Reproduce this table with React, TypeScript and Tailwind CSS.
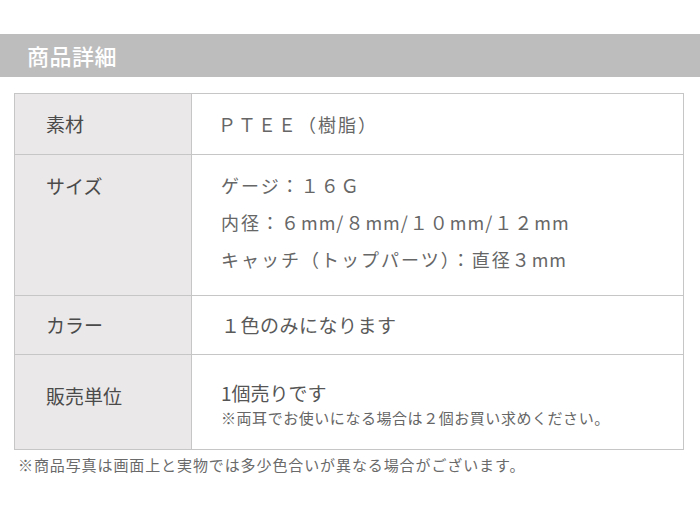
const FONT = "font-['Noto_Sans_CJK_JP','Noto_Sans',sans-serif]";

function Row({
  label,
  height,
  alignTop,
  labelClass = "",
  children,
}: {
  label: string;
  height: string;
  alignTop?: boolean;
  labelClass?: string;
  children: React.ReactNode;
}) {
  return (
    <div className={`flex border-t border-[#c6c6c6] first:border-t-0 ${height}`}>
      <div
        className={`flex w-[177px] shrink-0 border-r border-[#c6c6c6] bg-[#eae8e8] pl-[31px] text-[19px] text-[#4a4a4a] ${
          alignTop ? "items-start pt-[12px] leading-[37px]" : "items-center"
        } ${labelClass}`}
      >
        {label}
      </div>
      <div
        className={`flex flex-1 flex-col pl-[29px] text-[#666] ${alignTop ? "justify-start pt-[12px]" : "justify-center"}`}
      >
        {children}
      </div>
    </div>
  );
}

function Mm() {
  return <span className="text-[18px] tracking-[1px]">mm</span>;
}

export default function App() {
  return (
    <div className={`h-[506px] w-[700px] bg-white pt-[34px] ${FONT}`}>
      <div className="flex h-[43px] items-center bg-[#bdbdbd] pl-[27px] text-[22px] font-medium tracking-[0.5px] text-white">
        商品詳細
      </div>

      <div className="ml-[14px] mr-[16px] mt-[16px] border border-[#c6c6c6]">
        <Row label="素材" height="h-[60px]">
          <p className="-ml-[3px] text-[18px] tracking-[2px]">ＰＴＥＥ（樹脂）</p>
        </Row>
        <Row label="サイズ" height="h-[141px]" alignTop>
          <div className="text-[18px] leading-[37px] tracking-[2px]">
            <p>ゲージ：１６Ｇ</p>
            <p>
              内径：６<Mm />/８<Mm />/１０<Mm />/１２<Mm />
            </p>
            <p>
              キャッチ（トップパーツ）：直径３<Mm />
            </p>
          </div>
        </Row>
        <Row label="カラー" height="h-[59px]">
          <p className="text-[19px] tracking-[0.5px] text-[#5a5a5a]">１色のみになります</p>
        </Row>
        <Row label="販売単位" height="h-[95px]" labelClass="pb-[12px]">
          <p className="pt-[6px] text-[19px] leading-[24px] text-[#555]">1個売りです</p>
          <p className="pt-[2px] text-[15px] leading-[22px] tracking-[0.55px] text-[#666]">
            ※両耳でお使いになる場合は２個お買い求めください。
          </p>
        </Row>
      </div>

      <p className="mt-[4px] pl-[18px] text-[15px] leading-[22px] tracking-[0.9px] text-[#6a6a6a]">
        ※商品写真は画面上と実物では多少色合いが異なる場合がございます。
      </p>
    </div>
  );
}
